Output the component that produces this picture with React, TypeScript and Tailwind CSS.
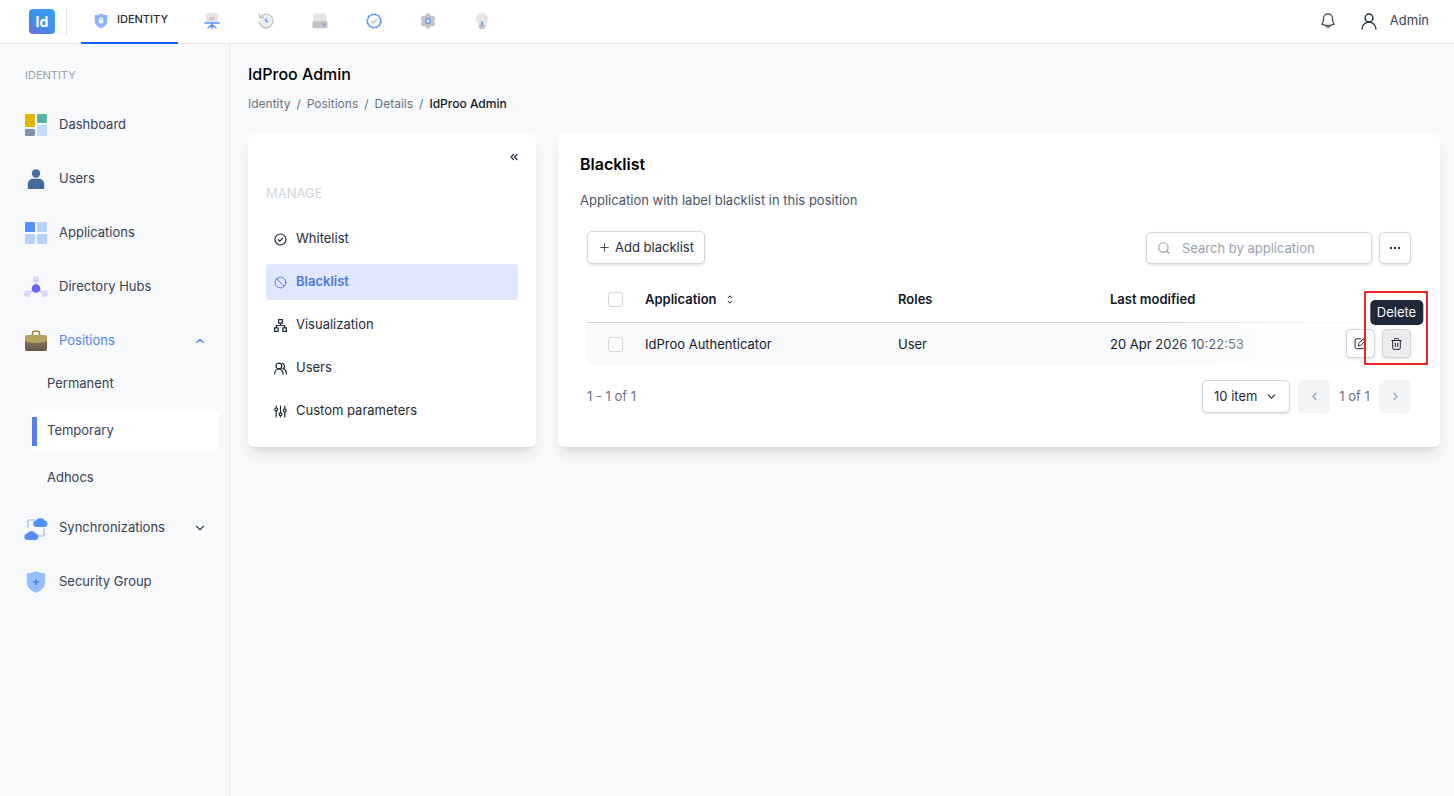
import { useState } from "react";
import type { ReactNode } from "react";
import {
  Ban,
  ChevronDown,
  ChevronLeft,
  ChevronRight,
  ChevronUp,
  ChevronsLeft,
  Plus,
  Search,
} from "lucide-react";

/* ---------- Top bar icons ---------- */

function LogoIcon() {
  return (
    <span className="flex h-[25px] w-[26px] items-center justify-center rounded bg-[linear-gradient(35deg,#7468d8_0%,#3d8ee8_40%,#3aa0fa_100%)] text-sm font-bold text-white">
      Id
    </span>
  );
}

function ShieldLockIcon() {
  return (
    <svg width="14" height="16" viewBox="0 0 14 16" aria-hidden="true">
      <path d="M7 .5c1.800 1 3.900 1.500 6.200 1.500v6.300c0 3.200-2.500 5.700-6.200 7.200C3.300 14 .8 11.500.8 8.300V2C3.100 2 5.200 1.500 7 .5z" fill="#8ab1fb" />
      <path d="M5.600 7.200V6a1.400 1.400 0 0 1 2.800 0v1.200" fill="none" stroke="#fff" />
      <rect x="4.700" y="6.500" width="4.600" height="3.800" rx=".6" fill="#fff" />
    </svg>
  );
}

function BoardIcon() {
  return (
    <svg width="16" height="16" viewBox="0 0 16 16" aria-hidden="true">
      <rect x="2" width="12" height="10" rx="1" fill="#e5e5e7" />
      <path d="m5 7.500 2-2.500 1.500 1.500L10.500 4" fill="none" stroke="#b9babf" strokeWidth="1.200" />
      <path d="M.8 10h14.400M8 10v5.300M8 12l-4 2.600M8 12l4 2.600" fill="none" stroke="#5a96fb" strokeWidth="1.500" strokeLinecap="round" />
    </svg>
  );
}

function HistoryIcon() {
  return (
    <svg width="16" height="16" viewBox="0 0 16 16" aria-hidden="true">
      <circle cx="8.200" cy="8.200" r="6" fill="#ececee" />
      <path d="M2.300 4.200A6.900 6.900 0 1 1 1.200 8.500" fill="none" stroke="#bfc0c6" strokeWidth="1.300" strokeLinecap="round" />
      <path d="M1.300 1.200 2 4.900l3.600-.5" fill="none" stroke="#bfc0c6" strokeWidth="1.300" strokeLinecap="round" />
      <path d="M8 5.200v2.900l1.800 1" fill="none" stroke="#5a96fb" strokeWidth="1.400" />
    </svg>
  );
}

function DriveIcon() {
  return (
    <svg width="16" height="16" viewBox="0 0 16 16" aria-hidden="true">
      <path d="M3.500.5h9a2 2 0 0 1 1.900 1.600L15 8H1l.6-5.900A2 2 0 0 1 3.500.5z" fill="#e6e6e8" />
      <rect x=".5" y="8" width="15" height="7.300" rx="1.800" fill="#c3c3ca" />
      <circle cx="12" cy="11.500" r=".9" fill="#4c8dfb" />
    </svg>
  );
}

function SealCheckIcon() {
  return (
    <svg width="16" height="16" viewBox="0 0 16 16" aria-hidden="true">
      <circle cx="8" cy="8" r="6.500" fill="none" stroke="#5a96fb" strokeWidth="1.200" />
      <circle cx="8" cy="8" r="7.100" fill="none" stroke="#5a96fb" strokeWidth="1.300" strokeDasharray="2.200 1.520" />
      <path d="m5.200 8 2 2 3.600-3.700" fill="none" stroke="#b9babf" strokeWidth="1.400" />
    </svg>
  );
}

function GearIcon() {
  return (
    <svg width="16" height="16" viewBox="0 0 16 16" aria-hidden="true">
      <circle cx="8" cy="8" r="6.200" fill="#c3c3ca" />
      <path d="M8 2.600v10.800M3.200 5.200l9.600 5.600M12.800 5.200l-9.600 5.600" stroke="#c3c3ca" strokeWidth="4.800" strokeLinecap="round" />
      <circle cx="8" cy="8" r="2.300" fill="#e3ebfa" stroke="#5a96fb" strokeWidth="1.300" />
    </svg>
  );
}

function BulbIcon() {
  return (
    <svg width="14" height="16" viewBox="0 0 14 16" aria-hidden="true">
      <path d="M7 0a6 6 0 0 1 3.300 11H3.700A6 6 0 0 1 7 0z" fill="#e6e6e8" />
      <path d="M3.500 11.500h7v2.300L9 16H5l-1.500-2.200z" fill="#c3c3ca" />
      <path d="M7 9.300V12" stroke="#4c8dfb" strokeWidth="1.600" strokeLinecap="round" />
    </svg>
  );
}

function BellIcon() {
  return (
    <svg width="14" height="16" viewBox="0 0 14 16" fill="none" stroke="#374151" strokeWidth="1.200" strokeLinejoin="round" aria-hidden="true">
      <path d="M7 .8a4.500 4.500 0 0 0-4.500 4.500v2.500L.8 11.300c1.800.8 4 1.200 6.200 1.200s4.400-.4 6.200-1.200l-1.700-3.500V5.300A4.500 4.500 0 0 0 7 .8z" />
      <path d="M4.900 12.600a2.200 2.200 0 0 0 4.200 0" />
    </svg>
  );
}

function AccountIcon() {
  return (
    <svg width="16" height="17" viewBox="0 0 16 17" fill="none" stroke="#1f2937" strokeWidth="1.400" strokeLinecap="round" aria-hidden="true">
      <circle cx="8" cy="4.900" r="3.900" />
      <path d="M1.100 16a6.900 6.900 0 0 1 13.800 0" />
    </svg>
  );
}

/* ---------- Sidebar icons ---------- */

function DashboardIcon() {
  return (
    <svg width="24" height="24" viewBox="0 0 24 24" aria-hidden="true">
      <rect x="1" y="1" width="10" height="13" rx="1" fill="#e3b505" />
      <rect x="13" y="1" width="10" height="9" rx="1" fill="#54b4a8" />
      <rect x="1" y="16" width="10" height="7" rx="1" fill="#8091b1" />
      <rect x="13" y="12" width="10" height="11" rx="1" fill="#c3daff" />
    </svg>
  );
}

function UserSolidIcon() {
  return (
    <svg width="24" height="24" viewBox="0 0 24 24" aria-hidden="true">
      <circle cx="12" cy="6.500" r="4.200" fill="#456c9c" />
      <path d="M3.800 22v-4.500c0-3.700 2.500-5.700 5.700-5.700h5c3.200 0 5.700 2 5.700 5.700V22z" fill="#456c9c" />
      <path d="M7.300 18.500V22M16.700 18.500V22" stroke="#2f5486" />
    </svg>
  );
}

function ApplicationsIcon() {
  return (
    <svg width="24" height="24" viewBox="0 0 24 24" aria-hidden="true">
      <rect x="1" y="1" width="10" height="10" rx="1" fill="#5291ff" />
      <rect x="13" y="1" width="10" height="10" rx="1" fill="#b7d2ff" />
      <rect x="1" y="13" width="10" height="10" rx="1" fill="#b7d2ff" />
      <rect x="13" y="13" width="10" height="10" rx="1" fill="#b7d2ff" />
    </svg>
  );
}

function HubIcon() {
  return (
    <svg width="24" height="24" viewBox="0 0 24 24" aria-hidden="true">
      <path d="M12 4v9M12 13.500l-8.500 5.300M12 13.500l8.500 5.300" stroke="#c8c4fd" strokeWidth="1.500" />
      <circle cx="12" cy="4.300" r="3.200" fill="#dad8fe" />
      <circle cx="3.300" cy="18.800" r="3.200" fill="#dad8fe" />
      <circle cx="20.700" cy="18.800" r="3.200" fill="#dad8fe" />
      <circle cx="12" cy="13.500" r="4.300" fill="#6a64fb" />
    </svg>
  );
}

function BriefcaseIcon() {
  return (
    <svg width="24" height="24" viewBox="0 0 24 24" aria-hidden="true">
      <defs>
        <linearGradient id="case" x1="0" y1="0" x2="0" y2="1">
          <stop offset="0" stopColor="#8c8069" />
          <stop offset="1" stopColor="#665747" />
        </linearGradient>
      </defs>
      <path d="M8.500 6.500V4a1.800 1.800 0 0 1 1.800-1.800h3.400A1.800 1.800 0 0 1 15.500 4v2.500" fill="none" stroke="#a0813f" strokeWidth="1.600" />
      <rect x="1" y="8.500" width="22" height="13.500" rx="2" fill="url(#case)" />
      <path d="M3 6h18a2 2 0 0 1 2 2v3.800c-3 1.500-7 2.200-11 2.200S4 13.300 1 11.800V8a2 2 0 0 1 2-2z" fill="#b7a260" />
    </svg>
  );
}

function SyncIcon() {
  return (
    <svg width="24" height="24" viewBox="0 0 24 24" aria-hidden="true">
      <path d="M4 11V6a2 2 0 0 1 2-2h4M20 13v5a2 2 0 0 1-2 2h-3" fill="none" stroke="#c1d0f3" strokeWidth="1.900" strokeLinecap="round" />
      <path d="M12.300 11a3.300 3.300 0 0 1-.4-6.500A5.200 5.200 0 0 1 21 4.700 3.200 3.200 0 0 1 20.800 11z" fill="#5291ff" />
      <path d="M3.300 24a3.300 3.300 0 0 1-.4-6.500 5.200 5.200 0 0 1 9.100.2 3.200 3.200 0 0 1-.2 6.300z" fill="#5291ff" />
    </svg>
  );
}

function ShieldPlusIcon() {
  return (
    <svg width="24" height="24" viewBox="0 0 24 24" aria-hidden="true">
      <path d="M12 1c2.500 1.500 5.500 2 8.500 2 .5 0 .7.300.7.800V12c0 5-3.700 8.700-9.200 11-5.500-2.300-9.200-6-9.200-11V3.800c0-.5.200-.8.700-.8 3 0 6-.5 8.500-2z" fill="#97bdff" />
      <path d="M12 9v6M9 12h6" stroke="#4a86f5" strokeWidth="1.600" />
    </svg>
  );
}

/* ---------- Small line icons ---------- */

function CircleCheckIcon() {
  return (
    <svg width="13" height="13" viewBox="0 0 13 13" fill="none" stroke="currentColor" strokeWidth="1.200" strokeLinecap="round" aria-hidden="true">
      <circle cx="6.500" cy="6.500" r="5.500" />
      <path d="m4.300 6.700 1.500 1.500 3-3" />
    </svg>
  );
}

function DiagramIcon() {
  return (
    <svg width="13" height="13" viewBox="0 0 13 13" fill="none" stroke="currentColor" strokeWidth="1.200" aria-hidden="true">
      <path d="M4.600.6h3.800v3.600H4.600zM.6 8.900h3.500v3.500H.6zM8.900 8.900h3.500v3.500H8.900zM6.500 4.200v2.300M2.400 8.900V6.500h8.200v2.400" />
    </svg>
  );
}

function PeopleIcon() {
  return (
    <svg width="13" height="13" viewBox="0 0 13 13" fill="none" stroke="currentColor" strokeWidth="1.200" strokeLinecap="round" aria-hidden="true">
      <circle cx="4.900" cy="4" r="2.900" />
      <path d="M.7 12c0-2.900 1.800-5 4.200-5s4.200 2.100 4.200 5M8.200 1.300a2.900 2.900 0 0 1 1 5.300c2 .6 3.200 2.700 3.200 5.200" />
    </svg>
  );
}

function SlidersIcon() {
  return (
    <svg width="13" height="13" viewBox="0 0 13 13" fill="none" stroke="currentColor" strokeWidth="1.200" strokeLinecap="round" aria-hidden="true">
      <path d="M2.200 1v1.800M2.200 6v6M6.500 1v6.500M6.500 10.800V12M10.800 1v2.800M10.800 7v5" />
      <circle cx="2.200" cy="4.400" r="1.400" />
      <circle cx="6.500" cy="9.200" r="1.400" />
      <circle cx="10.800" cy="5.400" r="1.400" />
    </svg>
  );
}

function SortIcon() {
  return (
    <svg width="6" height="9" viewBox="0 0 6 9" fill="none" stroke="#111827" aria-hidden="true">
      <path d="m.8 3 2.200-2.200L5.200 3M.8 6 3 8.200 5.200 6" />
    </svg>
  );
}

function EditIcon() {
  return (
    <svg width="13" height="13" viewBox="0 0 13 13" fill="none" stroke="currentColor" strokeLinejoin="round" aria-hidden="true">
      <path d="M7 1.800H2.500a1.400 1.400 0 0 0-1.400 1.400v7.100a1.400 1.400 0 0 0 1.400 1.400h7.100a1.400 1.400 0 0 0 1.400-1.400V6.500" />
      <path d="m4.300 8.800.4-2.400L10.200.9l2 2-5.500 5.500zM8.800 2.300l2 2" />
    </svg>
  );
}

function TrashIcon() {
  return (
    <svg width="11" height="12" viewBox="0 0 11 12" fill="none" stroke="currentColor" strokeLinecap="round" aria-hidden="true">
      <path d="M.8 2.500h9.400M3.500 2.300v-.8a1 1 0 0 1 1-1h2a1 1 0 0 1 1 1v.8M1.700 2.700v7.500a1.200 1.200 0 0 0 1.200 1.200h5.200a1.200 1.200 0 0 0 1.200-1.200V2.700M4.300 5.200v3.400M6.700 5.200v3.400" />
    </svg>
  );
}

/* ---------- Data ---------- */

const MODULES: { name: string; icon: ReactNode }[] = [
  { name: "Monitoring", icon: <BoardIcon /> },
  { name: "History", icon: <HistoryIcon /> },
  { name: "Storage", icon: <DriveIcon /> },
  { name: "Approval", icon: <SealCheckIcon /> },
  { name: "Settings", icon: <GearIcon /> },
  { name: "Insights", icon: <BulbIcon /> },
];

const MANAGE_ITEMS: { name: string; icon: ReactNode }[] = [
  { name: "Whitelist", icon: <CircleCheckIcon /> },
  { name: "Blacklist", icon: <Ban size={13} strokeWidth={1.8} /> },
  { name: "Visualization", icon: <DiagramIcon /> },
  { name: "Users", icon: <PeopleIcon /> },
  { name: "Custom parameters", icon: <SlidersIcon /> },
];

const POSITION_TYPES = ["Permanent", "Temporary", "Adhocs"];
const CRUMBS = ["Identity", "Positions", "Details"];

const outlineButton =
  "flex items-center justify-center rounded-[5px] border border-gray-300 bg-white text-gray-800 shadow-sm";
const checkbox =
  "block h-[15px] w-[15px] appearance-none rounded-[3px] border border-gray-300 bg-white checked:border-blue-600 checked:bg-blue-600";

/* ---------- Layout ---------- */

function TopBar() {
  return (
    <header className="flex h-11 items-stretch border-b border-gray-200 bg-white pr-[25px] pl-[29px]">
      <a href="#" aria-label="Home" className="flex items-center">
        <LogoIcon />
      </a>
      <div className="mt-2 mr-[14px] ml-[11px] h-[27px] w-px bg-gray-200" />
      <nav className="flex items-stretch">
        <a
          href="#identity"
          className="-mb-px flex w-[97px] items-center justify-center gap-[9px] border-b-2 border-blue-600 pb-1 pl-[3px] text-[11px] font-medium text-gray-800"
        >
          <span className="pt-1">
            <ShieldLockIcon />
          </span>
          IDENTITY
        </a>
        <div className="ml-[7px] flex pb-px">
          {MODULES.map((m) => (
            <a key={m.name} href="#" aria-label={m.name} className="flex w-[54px] items-center justify-center">
              {m.icon}
            </a>
          ))}
        </div>
      </nav>
      <div className="ml-auto flex items-center gap-[26px] pb-px">
        <button type="button" aria-label="Notifications">
          <BellIcon />
        </button>
        <button type="button" className="flex items-center gap-[13px] text-[13px] text-gray-700">
          <AccountIcon />
          Admin
        </button>
      </div>
    </header>
  );
}

function SideLink({ icon, label, open, active }: { icon: ReactNode; label: string; open?: boolean; active?: boolean }) {
  return (
    <a
      href="#"
      className={`flex h-10 items-center gap-[11px] pr-[22px] pl-6 text-[13px] ${active ? "text-[#5481f0]" : "text-gray-700"}`}
    >
      {icon}
      <span className="flex-1">{label}</span>
      {open === true && <ChevronUp size={14} />}
      {open === false && <ChevronDown size={14} />}
    </a>
  );
}

function Sidebar() {
  const [current, setCurrent] = useState("Temporary");

  return (
    <aside className="w-[230px] shrink-0 border-r border-gray-200">
      <h2 className="px-[25px] pt-6 pb-[22px] text-[11px] leading-[15px] text-gray-400">IDENTITY</h2>
      <nav className="flex flex-col gap-3.5">
        <SideLink icon={<DashboardIcon />} label="Dashboard" />
        <SideLink icon={<UserSolidIcon />} label="Users" />
        <SideLink icon={<ApplicationsIcon />} label="Applications" />
        <SideLink icon={<HubIcon />} label="Directory Hubs" />
        <div>
          <SideLink icon={<BriefcaseIcon />} label="Positions" open active />
          <ul className="-mb-1 flex flex-col gap-[7px] pt-[3px] pr-[10px] pl-8">
            {POSITION_TYPES.map((type) => (
              <li key={type}>
                <a
                  href="#"
                  onClick={() => setCurrent(type)}
                  className={`flex h-10 items-center rounded text-[13px] text-gray-700 ${current === type ? "bg-white" : ""}`}
                >
                  <span className={`mr-[10px] h-[29px] w-[5px] ${current === type ? "bg-[#5481f0]" : ""}`} />
                  {type}
                </a>
              </li>
            ))}
          </ul>
        </div>
        <SideLink icon={<SyncIcon />} label="Synchronizations" open={false} />
        <SideLink icon={<ShieldPlusIcon />} label="Security Group" />
      </nav>
    </aside>
  );
}

function ManagePanel() {
  const [selected, setSelected] = useState("Blacklist");

  return (
    <section className="w-72 shrink-0 rounded-md bg-white px-[18px] pb-[18px] shadow-lg">
      <div className="flex justify-end pt-[17px]">
        <button type="button" aria-label="Collapse" className="-mr-0.5 text-gray-800">
          <ChevronsLeft size={12} strokeWidth={2.5} />
        </button>
      </div>
      <h2 className="mt-5 mb-[18px] text-[13px] leading-5 text-gray-300">MANAGE</h2>
      <ul className="flex flex-col gap-[7px]">
        {MANAGE_ITEMS.map((item) => (
          <li key={item.name}>
            <a
              href="#"
              onClick={() => setSelected(item.name)}
              className={`flex h-9 items-center rounded px-2 text-[13px] ${
                selected === item.name ? "bg-indigo-100 font-semibold text-[#4d78e0]" : "text-gray-800"
              }`}
            >
              <span className="flex w-[22px] pt-px">{item.icon}</span>
              {item.name}
            </a>
          </li>
        ))}
      </ul>
    </section>
  );
}

function BlacklistTable() {
  return (
    <table className="mt-3 w-full table-fixed text-left text-[13px]">
      <colgroup>
        <col className="w-[58px]" />
        <col className="w-[253px]" />
        <col className="w-[212px]" />
        <col />
      </colgroup>
      <thead>
        <tr className="h-[46px] border-b border-gray-300 text-gray-900">
          <th className="pt-0.5 pl-[21px]">
            <input type="checkbox" aria-label="Select all" className={checkbox} />
          </th>
          <th className="pt-0.5 font-semibold">
            <button type="button" className="flex items-center gap-[10px]">
              Application <SortIcon />
            </button>
          </th>
          <th className="pt-0.5 font-semibold">Roles</th>
          <th className="pt-0.5 font-semibold">Last modified</th>
        </tr>
      </thead>
      <tbody>
        <tr className="h-11 bg-gray-50 text-gray-900">
          <td className="pl-[21px]">
            <input type="checkbox" aria-label="Select IdProo Authenticator" className={checkbox} />
          </td>
          <td>IdProo Authenticator</td>
          <td>User</td>
          <td className="relative">
            20 Apr 2026 10:22:53
            <div className="absolute -top-px right-0 bottom-0 flex w-64 items-center justify-end gap-[7px] bg-linear-to-r from-white/0 via-white/65 to-white">
              <button type="button" aria-label="Edit" className={`${outlineButton} h-[29px] w-[29px]`}>
                <EditIcon />
              </button>
              <div className="relative">
                <button
                  type="button"
                  aria-label="Delete"
                  className="flex h-[29px] w-[29px] items-center justify-center rounded-[5px] border border-gray-300 bg-[#edebec] text-gray-800 shadow-sm"
                >
                  <TrashIcon />
                </button>
                <span
                  role="tooltip"
                  className="absolute bottom-[33px] left-1/2 h-[25px] -translate-x-1/2 rounded-[5px] bg-gray-800 px-[7px] text-[13px] leading-6 text-white"
                >
                  Delete
                </span>
                <div className="pointer-events-none absolute -top-[38px] -right-[17px] -bottom-[7px] -left-[18px] border-2 border-[#e8262a]" />
              </div>
            </div>
          </td>
        </tr>
      </tbody>
    </table>
  );
}

function Pagination() {
  const pageButton = "flex h-[33px] w-8 items-center justify-center rounded-[5px] bg-gray-100 text-gray-400";

  return (
    <div className="mt-3.5 flex items-center text-[13px] text-gray-500">
      <span className="flex-1">1 - 1 of 1</span>
      <div className="relative mr-2">
        <select
          aria-label="Rows per page"
          className="block h-[33px] w-[88px] appearance-none rounded-[5px] border border-gray-300 bg-white pl-[11px] text-gray-800 shadow-sm"
        >
          <option>10 item</option>
          <option>25 item</option>
          <option>50 item</option>
        </select>
        <ChevronDown size={13} className="pointer-events-none absolute top-[10px] right-3 text-gray-800" />
      </div>
      <button type="button" disabled aria-label="Previous page" className={pageButton}>
        <ChevronLeft size={13} />
      </button>
      <span className="w-[49px] text-center">1 of 1</span>
      <button type="button" disabled aria-label="Next page" className={pageButton}>
        <ChevronRight size={13} />
      </button>
    </div>
  );
}

function BlacklistPanel() {
  const [query, setQuery] = useState("");

  return (
    <section className="min-w-0 flex-1 rounded-md bg-white px-[22px] pt-[18px] pb-8 shadow-lg">
      <h2 className="text-base font-semibold text-black">Blacklist</h2>
      <p className="mt-[14px] text-[13px] leading-5 text-gray-600">Application with label blacklist in this position</p>
      <div className="px-[7px]">
        <div className="mt-[21px] flex items-center">
          <button type="button" className={`${outlineButton} h-[33px] gap-1 px-[10px] text-[13px]`}>
            <Plus size={13} strokeWidth={1.5} />
            Add blacklist
          </button>
          <div className="relative mr-[7px] ml-auto">
            <Search size={14} strokeWidth={2} className="pointer-events-none absolute top-[9px] left-[11px] text-gray-400" />
            <input
              type="text"
              aria-label="Search by application"
              placeholder="Search by application"
              value={query}
              onChange={(e) => setQuery(e.target.value)}
              className="block h-8 w-[226px] rounded-[5px] border border-gray-300 bg-white pr-3 pl-[35px] text-[13px] text-gray-800 shadow-sm placeholder:text-gray-400"
            />
          </div>
          <button type="button" aria-label="More actions" className={`${outlineButton} h-8 w-8`}>
            <span className="flex gap-[2px]">
              <i className="h-0.5 w-0.5 bg-gray-800" />
              <i className="h-0.5 w-0.5 bg-gray-800" />
              <i className="h-0.5 w-0.5 bg-gray-800" />
            </span>
          </button>
        </div>
        <BlacklistTable />
        <Pagination />
      </div>
    </section>
  );
}

export default function App() {
  return (
    <div className="flex min-h-screen flex-col bg-[#f8f9fb] font-['Inter',sans-serif]">
      <TopBar />
      <div className="flex flex-1">
        <Sidebar />
        <main className="min-w-0 flex-1 pr-3.5 pl-[18px]">
          <h1 className="pt-[18px] text-base font-medium text-black">IdProo Admin</h1>
          <nav aria-label="Breadcrumb" className="mt-2.5 flex text-xs text-gray-500">
            {CRUMBS.map((crumb) => (
              <span key={crumb} className="flex">
                <a href="#">{crumb}</a>
                <span className="px-1.5">/</span>
              </span>
            ))}
            <span className="font-medium text-gray-900">IdProo Admin</span>
          </nav>
          <div className="mt-[22px] flex gap-[22px]">
            <ManagePanel />
            <BlacklistPanel />
          </div>
        </main>
      </div>
    </div>
  );
}
